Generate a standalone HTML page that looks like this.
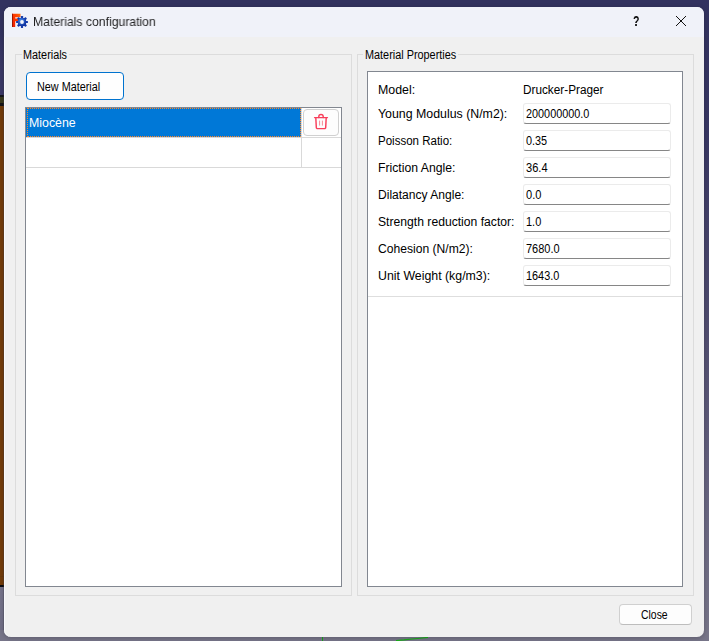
<!DOCTYPE html>
<html><head><meta charset="utf-8"><title>Materials configuration</title>
<style>
html,body{margin:0;padding:0}
body{width:709px;height:641px;overflow:hidden;position:relative;background:#32325f;font-family:"Liberation Sans",sans-serif;font-size:12px}
div,span{position:absolute;box-sizing:border-box}
.t{white-space:pre;line-height:14px;transform-origin:0 50%}
#bgl0{left:0;top:30px;width:5px;height:65px;background:linear-gradient(#32325f,#3b3966 60%)}
#bgl1{left:0;top:95px;width:5px;height:8px;background:#3a3a1c;border-top:2px solid #15151a}
#bgl2{left:0;top:103px;width:5px;height:3px;background:#141418}
#bgl3{left:0;top:106px;width:5px;height:480px;background:#733c0a}
#bgl4{left:0;top:585px;width:5px;height:56px;background:linear-gradient(#77758c,#6e6c84)}
#bgl5{left:0;top:585px;width:5px;height:2px;background:#0c0c10}
#bgl6{left:0;top:576px;width:5px;height:1px;background:#6a3a0c}
#bgr{left:703px;top:0;width:6px;height:641px;background:linear-gradient(#32325f 0%,#383763 20%,#4f4c6e 50%,#65627e 75%,#787689 100%)}
#bgb{left:0;top:630px;width:709px;height:11px;background:#777589}
#win{left:4px;top:7px;width:700px;height:630px;background:#f0f0f0;border-radius:7px;overflow:hidden;box-shadow:inset 1px 0 0 #f8f9fc,0 1px 5px rgba(0,0,10,0.22)}
#shl{left:3px;top:14px;width:1px;height:616px;background:rgba(70,70,80,0.28)}
#tb{left:0;top:0;width:700px;height:30px;background:#f0f2f9}
.gb{border:1px solid #dcdcdc}
#gb1{left:15px;top:54px;width:337px;height:542px}
#gb2{left:357px;top:54px;width:337px;height:542px}
.gl{background:#f0f0f0;height:12px;top:49px}
#tbl{left:25px;top:107px;width:317px;height:480px;background:#fff;border:1px solid #828790}
#pnl{left:367px;top:71px;width:316px;height:516px;background:#fff;border:1px solid #828790}
.btn{background:#fdfdfd;border:1px solid #d0d0d0;border-radius:4px}
#newb{left:26px;top:72px;width:98px;height:28px;background:#fefefe;border:1px solid #0073cf;border-radius:4px}
#sel{left:26px;top:108px;width:275px;height:29px;background:#0078d7}
#foc{left:27px;top:108px;width:274px;height:29px;border:1px dotted #ff8728}
.hl{height:1px;background:#d9d9d9}
.vl{width:1px;background:#d9d9d9}
.le{left:523px;width:148px;height:21px;background:#fff;border:1px solid #ebebeb;border-bottom:1px solid #868686;border-radius:3px}
</style></head><body>
<div id="bgl0"></div><div id="bgl1"></div><div id="bgl2"></div><div id="bgl3"></div><div id="bgl4"></div><div id="bgl5"></div><div id="bgl6"></div><div id="bgr"></div><div id="bgb"></div>
<svg style="position:absolute;left:300px;top:636px" width="160" height="5" viewBox="0 0 160 5"><path d="M22.5 1 V5" stroke="#18a818" stroke-width="1" fill="none"/><path d="M96 4.6 L104 3.9 L112 3 L120 2.2 L128 1.4" stroke="#18b018" stroke-width="1.1" fill="none"/></svg>
<div id="shl"></div>
<div id="win"><div id="tb"></div></div>
<svg style="position:absolute;left:11px;top:13px" width="18" height="16" viewBox="0 0 18 16">
<defs><linearGradient id="fg" x1="0" y1="1" x2="1" y2="0"><stop offset="0" stop-color="#ee1c00"/><stop offset="0.6" stop-color="#ff3a00"/><stop offset="1" stop-color="#ff7010"/></linearGradient>
<radialGradient id="gg" cx="0.4" cy="0.35" r="0.7"><stop offset="0" stop-color="#4a8fee"/><stop offset="1" stop-color="#0a2a9a"/></radialGradient></defs>
<path d="M1 0.8 H9.5 V4.2 H4.2 V5.4 H7.6 V8.2 H4.2 V14 H1 Z" fill="url(#fg)"/>
<path d="M1 0.8 V14 H1.8 V0.8 Z" fill="#8a1200"/>
<g transform="translate(11,9)"><circle r="4.3" fill="url(#gg)"/>
<g fill="#1238a8"><rect x="-1.1" y="-5.9" width="2.2" height="11.8" rx="0.4"/><rect x="-1.1" y="-5.9" width="2.2" height="11.8" rx="0.4" transform="rotate(45)"/><rect x="-1.1" y="-5.9" width="2.2" height="11.8" rx="0.4" transform="rotate(90)"/><rect x="-1.1" y="-5.9" width="2.2" height="11.8" rx="0.4" transform="rotate(135)"/></g>
<circle r="4.1" fill="url(#gg)"/><circle r="1.9" fill="#f4f6fb"/></g>
</svg>
<svg style="position:absolute;left:675px;top:15px" width="12" height="12" viewBox="0 0 12 12"><path d="M1 1 L11 11 M11 1 L1 11" stroke="#111" stroke-width="1" fill="none"/></svg>
<div class="gb" id="gb1"></div><div class="gb" id="gb2"></div>
<div class="gl" style="left:22px;width:47px"></div><div class="gl" style="left:363px;width:95px"></div>
<div id="newb"></div>
<div id="tbl"></div>
<div id="sel"></div><div id="foc"></div>
<div class="hl" style="left:26px;top:137px;width:315px"></div>
<div class="hl" style="left:26px;top:167px;width:315px"></div>
<div class="vl" style="left:301px;top:108px;height:60px"></div>
<div class="btn" style="left:303px;top:109px;width:36px;height:27px"></div>
<svg style="position:absolute;left:313px;top:113px" width="16" height="18" viewBox="0 0 16 18">
<g fill="none" stroke="#f83f5b" stroke-width="1.45" stroke-linecap="round" stroke-linejoin="round">
<path d="M1.6 4.6 H14.4"/><path d="M5.8 4.4 V3.6 A2.2 2.2 0 0 1 10.2 3.6 V4.4"/><path d="M2.8 4.8 L3.3 14.4 A1.2 1.2 0 0 0 4.5 15.6 H11.5 A1.2 1.2 0 0 0 12.7 14.4 L13.2 4.8"/></g>
<g stroke="#f68a98" stroke-width="1" stroke-linecap="round"><path d="M6.6 8 V12.2"/><path d="M9.4 8 V12.2"/></g>
</svg>
<div id="pnl"></div>
<div class="hl" style="left:368px;top:296px;width:314px;background:#dedede"></div>
<div class="le" style="top:103px"></div><div class="le" style="top:130px"></div><div class="le" style="top:157px"></div><div class="le" style="top:184px"></div><div class="le" style="top:211px"></div><div class="le" style="top:238px"></div><div class="le" style="top:265px"></div>
<div class="btn" style="left:619px;top:604px;width:73px;height:21px;border-bottom-color:#bdbdbd"></div>
<span class="t" style="left:22.58px;top:47.74px;font-size:12.3px;transform:scaleX(0.8831);color:#000">Materials</span>
<span class="t" style="left:36.96px;top:79.54px;font-size:12.3px;transform:scaleX(0.8807);color:#000">New Material</span>
<span class="t" style="left:29.00px;top:115.64px;font-size:12.3px;transform:scaleX(1.0055);color:#fff">Miocène</span>
<span class="t" style="left:364.96px;top:47.74px;font-size:12.3px;transform:scaleX(0.8836);color:#000">Material Properties</span>
<span class="t" style="left:378.04px;top:82.74px;font-size:12.3px;transform:scaleX(1.0069);color:#000">Model:</span>
<span class="t" style="left:377.54px;top:106.74px;font-size:12.3px;transform:scaleX(1.0044);color:#000">Young Modulus (N/m2):</span>
<span class="t" style="left:377.80px;top:133.74px;font-size:12.3px;transform:scaleX(0.9366);color:#000">Poisson Ratio:</span>
<span class="t" style="left:378.06px;top:160.74px;font-size:12.3px;transform:scaleX(0.9930);color:#000">Friction Angle:</span>
<span class="t" style="left:377.55px;top:187.74px;font-size:12.3px;transform:scaleX(0.9802);color:#000">Dilatancy Angle:</span>
<span class="t" style="left:377.57px;top:214.74px;font-size:12.3px;transform:scaleX(0.9885);color:#000">Strength reduction factor:</span>
<span class="t" style="left:377.74px;top:241.74px;font-size:12.3px;transform:scaleX(0.9856);color:#000">Cohesion (N/m2):</span>
<span class="t" style="left:378.12px;top:268.74px;font-size:12.3px;transform:scaleX(1.0036);color:#000">Unit Weight (kg/m3):</span>
<span class="t" style="left:522.83px;top:82.74px;font-size:12.3px;transform:scaleX(0.9580);color:#000">Drucker-Prager</span>
<span class="t" style="left:525.83px;top:106.74px;font-size:12.3px;transform:scaleX(0.8828);color:#000">200000000.0</span>
<span class="t" style="left:525.88px;top:133.74px;font-size:12.3px;transform:scaleX(0.8819);color:#000">0.35</span>
<span class="t" style="left:525.80px;top:160.74px;font-size:12.3px;transform:scaleX(0.9012);color:#000">36.4</span>
<span class="t" style="left:525.90px;top:187.74px;font-size:12.3px;transform:scaleX(0.8989);color:#000">0.0</span>
<span class="t" style="left:526.02px;top:214.74px;font-size:12.3px;transform:scaleX(0.8913);color:#000">1.0</span>
<span class="t" style="left:525.83px;top:241.74px;font-size:12.3px;transform:scaleX(0.8937);color:#000">7680.0</span>
<span class="t" style="left:526.01px;top:268.74px;font-size:12.3px;transform:scaleX(0.8844);color:#000">1643.0</span>
<span class="t" style="left:641.39px;top:607.74px;font-size:12.3px;transform:scaleX(0.8479);color:#000">Close</span>
<span class="t" style="left:32.53px;top:14.80px;font-size:12.4px;transform:scaleX(0.9848);color:#000;opacity:0.88;will-change:transform">Materials configuration</span>
<span class="t" style="left:633.22px;top:14.25px;font-size:14px;font-weight:bold;transform:scaleX(0.7485);color:#000;will-change:transform">?</span>
</body></html>
